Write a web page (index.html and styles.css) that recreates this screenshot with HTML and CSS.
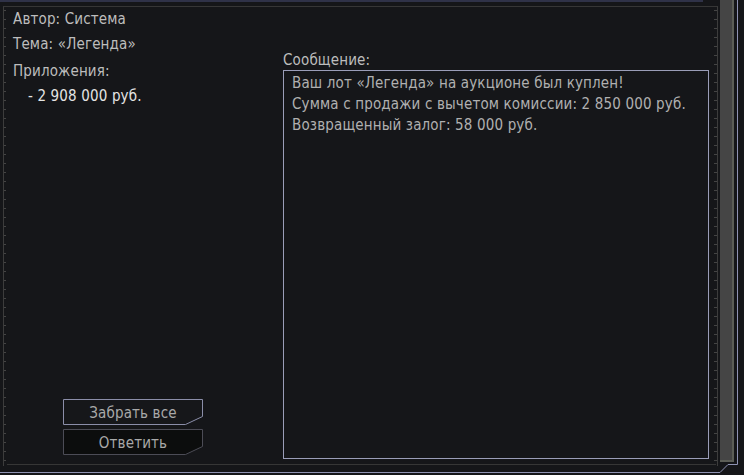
FILE: index.html
```html
<!DOCTYPE html>
<html lang="ru">
<head>
<meta charset="utf-8">
<title>Сообщение</title>
<link rel="stylesheet" href="styles.css">
</head>
<body>
<div class="window">
  <div class="main">
    <div class="topline"></div>
    <div class="frame">
      <div class="content">
        <div class="left">
          <div class="row">Автор: Система</div>
          <div class="row">Тема: «Легенда»</div>
          <div class="row attach-title">Приложения:</div>
          <div class="row amount">- 2 908 000 руб.</div>
          <div class="buttons">
            <button class="btn btn-primary">
              <svg class="btn-shape" viewBox="0 0 140 26" width="140" height="26"><path d="M0.5 0.5H139.5V17.5L122.5 25.5H0.5Z"/></svg>
              <span class="btn-label">Забрать все</span>
            </button>
            <button class="btn btn-secondary">
              <svg class="btn-shape" viewBox="0 0 140 26" width="140" height="26"><path d="M0.5 0.5H139.5V17.5L122.5 25.5H0.5Z"/></svg>
              <span class="btn-label">Ответить</span>
            </button>
          </div>
        </div>
        <div class="right">
          <div class="msg-label">Сообщение:</div>
          <div class="msg-box">
            <p>Ваш лот «Легенда» на аукционе был куплен!</p>
            <p>Сумма с продажи с вычетом комиссии: 2 850 000 руб.</p>
            <p>Возвращенный залог: 58 000 руб.</p>
          </div>
        </div>
      </div>
      <div class="bottomline"></div>
    </div>
  </div>
  <div class="scroll"></div>
  <svg class="outer" width="744" height="475" viewBox="0 0 744 475"><path d="M0 472.5H720L728 464.5H737.5V0"/></svg>
</div>
</body>
</html>
```

FILE: styles.css
```css
html, body {
  margin: 0;
  padding: 0;
  background: #151619;
  overflow: hidden;
}

.window {
  position: relative;
  width: 744px;
  height: 475px;
  display: flex;
  font-family: "DejaVu Sans Condensed", "DejaVu Sans", sans-serif;
  font-size: 15px;
  letter-spacing: 0.15px;
  color: #bdbdbd;
}

.main {
  width: 718px;
  display: flex;
  flex-direction: column;
}

.topline {
  width: 703px;
  height: 2px;
  background: #2f3248;
}

.frame {
  box-sizing: border-box;
  margin: 4px 0 0 3px;
  width: 715px;
  height: 460px;
  border-top: 1px solid #363636;
  border-left: 1px solid #3c3c3c;
  border-right: 1px solid #3c3c3c;
  display: flex;
  flex-direction: column;
  background:
    linear-gradient(to bottom, #444 0 1px, transparent 1px) left 0 top 3px / 2px 9px repeat-y,
    linear-gradient(to bottom, #444 0 1px, transparent 1px) right 0 top 3px / 3px 9px repeat-y;
}

.content {
  flex: 1;
  display: flex;
  padding-left: 9px;
}

.left {
  width: 270px;
  display: flex;
  flex-direction: column;
  padding-top: 2px;
  padding-bottom: 9px;
}

.row {
  line-height: 20px;
  height: 20px;
  margin-bottom: 5px;
  white-space: nowrap;
}

.attach-title {
  margin-top: 2px;
}

.amount {
  color: #e4e4e4;
  padding-left: 15px;
}

.buttons {
  margin-top: auto;
  margin-left: 50px;
  display: flex;
  flex-direction: column;
  gap: 4px;
}

.btn {
  position: relative;
  width: 140px;
  height: 26px;
  padding: 3px 0 0;
  margin: 0;
  border: 0;
  background: transparent;
  font: inherit;
  letter-spacing: inherit;
  color: #a9a9a9;
  line-height: 23px;
  text-align: center;
  cursor: pointer;
}

.btn-shape {
  position: absolute;
  left: 0;
  top: 0;
  display: block;
}

.btn-label {
  position: relative;
}

.btn-primary .btn-shape path {
  fill: #16171a;
  stroke: #8b8ea9;
  stroke-width: 1;
}

.btn-secondary .btn-shape path {
  fill: #0c0d0d;
  stroke: #4c4c56;
  stroke-width: 1;
}

.right {
  padding-top: 44px;
}

.msg-label {
  line-height: 19px;
  height: 19px;
  white-space: nowrap;
}

.msg-box {
  box-sizing: border-box;
  width: 426px;
  height: 389px;
  border: 1px solid #9a9db8;
  padding: 2px 8px;
  color: #b0b0b0;
}

.msg-box p {
  margin: 0;
  line-height: 21px;
  white-space: nowrap;
}

.bottomline {
  height: 1px;
  margin: 0 1px 1px 3px;
  background: #363636;
}

.scroll {
  box-sizing: border-box;
  margin-left: 2px;
  width: 14px;
  height: 462px;
  background: #454545;
  border-right: 2px solid #5c5e57;
  border-bottom: 2px solid #5c5e57;
}

.outer {
  position: absolute;
  left: 0;
  top: 0;
  pointer-events: none;
}

.outer path {
  fill: none;
  stroke: #8f93b3;
  stroke-width: 1;
}
```
